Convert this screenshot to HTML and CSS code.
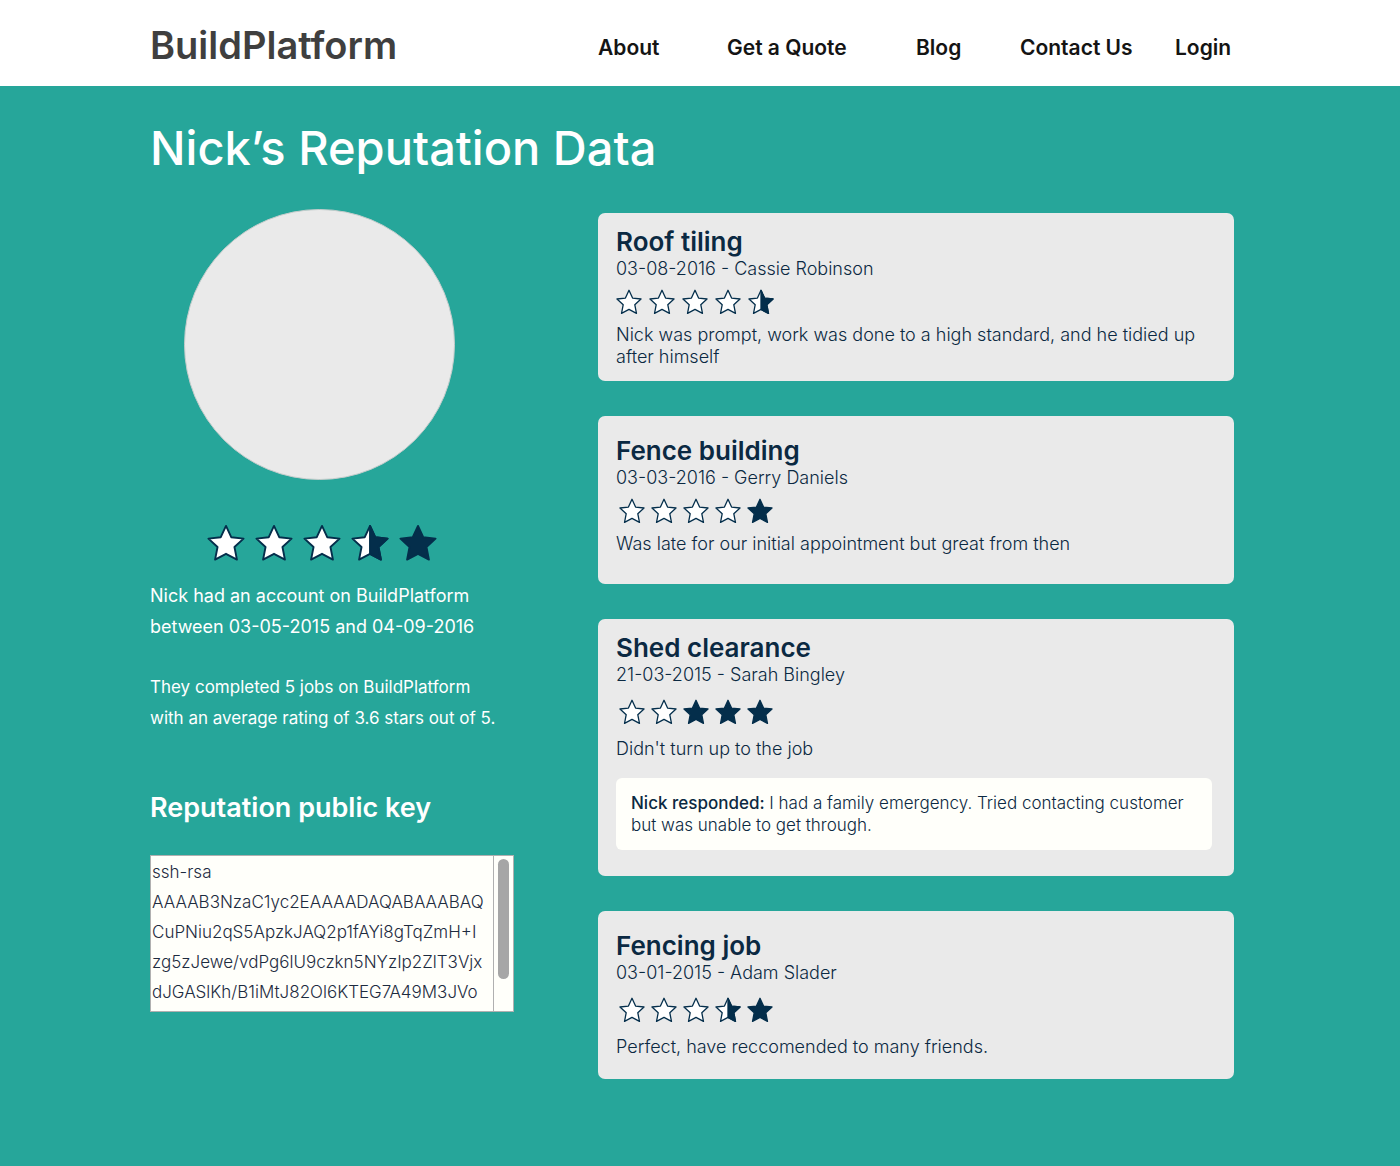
FILE: index.html
```html
<!DOCTYPE html>
<html lang="en">
<head>
  <meta charset="UTF-8" />
  <meta name="viewport" content="width=device-width, initial-scale=1" />
  <title>Nick’s Reputation Data - BuildPlatform</title>
  <link rel="stylesheet" href="styles.css">
</head>
<body>
  <!-- star shapes shared by every rating -->
  <svg class="sprite" aria-hidden="true">
    <defs>
      <path id="star-shape" d="M20 2 L25.5 13.9 L38.5 15.4 L28.9 24.2 L31.5 37.5 L20 31.4 L8.5 37.5 L11.1 24.2 L1.5 15.4 L14.5 13.9 Z" />
      <symbol id="star" viewBox="0 0 40 40" overflow="visible"><use href="#star-shape" fill="#ffffff" /></symbol>
      <symbol id="star-half" viewBox="0 0 40 40" overflow="visible">
        <use href="#star-shape" fill="#ffffff" />
        <path d="M20 2 L25.5 13.9 L38.5 15.4 L28.9 24.2 L31.5 37.5 L20 31.4 Z" fill="#042e4b" />
      </symbol>
      <symbol id="star-dark" viewBox="0 0 40 40" overflow="visible"><use href="#star-shape" fill="#042e4b" /></symbol>
    </defs>
  </svg>

  <header class="site-header">
    <div class="container header-grid">
      <a class="logo" href="#">BuildPlatform</a>
      <nav class="site-nav">
        <a href="#">About</a>
        <a href="#">Get a Quote</a>
        <a href="#">Blog</a>
        <a href="#">Contact Us</a>
        <a href="#">Login</a>
      </nav>
    </div>
  </header>

  <main class="container">
    <h1>Nick’s Reputation Data</h1>

    <div class="columns">
      <section class="profile">
        <div class="avatar"></div>
        <div class="stars stars-large" role="img" aria-label="3.5 stars">
          <svg><use href="#star" /></svg>
          <svg><use href="#star" /></svg>
          <svg><use href="#star" /></svg>
          <svg><use href="#star-half" /></svg>
          <svg><use href="#star-dark" /></svg>
        </div>
        <p>Nick had an account on BuildPlatform<br>between 03-05-2015 and 04-09-2016</p>
        <p class="summary">They completed 5 jobs on BuildPlatform<br>with an average rating of 3.6 stars out of 5.</p>

        <h2><label for="public-key">Reputation public key</label></h2>
        <div class="key-box">
          <textarea id="public-key" class="key" rows="5" readonly spellcheck="false">ssh-rsa
AAAAB3NzaC1yc2EAAAADAQABAAABAQ
CuPNiu2qS5ApzkJAQ2p1fAYi8gTqZmH+I
zg5zJewe/vdPg6lU9czkn5NYzIp2ZlT3Vjx
dJGASlKh/B1iMtJ82Ol6KTEG7A49M3JVo</textarea>
          <div class="key-scroll" aria-hidden="true"><div class="key-thumb"></div></div>
        </div>
      </section>

      <section class="reviews">
        <article class="card">
          <h2>Roof tiling</h2>
          <p>03-08-2016 - Cassie Robinson</p>
          <div class="stars stars-wide" role="img" aria-label="4.5 stars">
            <svg><use href="#star" /></svg>
            <svg><use href="#star" /></svg>
            <svg><use href="#star" /></svg>
            <svg><use href="#star" /></svg>
            <svg><use href="#star-half" /></svg>
          </div>
          <p>Nick was prompt, work was done to a high standard, and he tidied up after himself</p>
        </article>

        <article class="card card-short">
          <h2>Fence building</h2>
          <p>03-03-2016 - Gerry Daniels</p>
          <div class="stars" role="img" aria-label="4 stars">
            <svg><use href="#star" /></svg>
            <svg><use href="#star" /></svg>
            <svg><use href="#star" /></svg>
            <svg><use href="#star" /></svg>
            <svg><use href="#star-dark" /></svg>
          </div>
          <p>Was late for our initial appointment but great from then</p>
        </article>

        <article class="card">
          <h2>Shed clearance</h2>
          <p>21-03-2015 - Sarah Bingley</p>
          <div class="stars stars-tall" role="img" aria-label="2 stars">
            <svg><use href="#star" /></svg>
            <svg><use href="#star" /></svg>
            <svg><use href="#star-dark" /></svg>
            <svg><use href="#star-dark" /></svg>
            <svg><use href="#star-dark" /></svg>
          </div>
          <p>Didn't turn up to the job</p>
          <div class="response">
            <p><strong>Nick responded:</strong> I had a family emergency. Tried contacting customer<br>but was unable to get through.</p>
          </div>
        </article>

        <article class="card card-short">
          <h2>Fencing job</h2>
          <p>03-01-2015 - Adam Slader</p>
          <div class="stars stars-tall" role="img" aria-label="3.5 stars">
            <svg><use href="#star" /></svg>
            <svg><use href="#star" /></svg>
            <svg><use href="#star" /></svg>
            <svg><use href="#star-half" /></svg>
            <svg><use href="#star-dark" /></svg>
          </div>
          <p>Perfect, have reccomended to many friends.</p>
        </article>
      </section>
    </div>
  </main>
</body>
</html>
```
FILE: styles.css
```css
* {
  box-sizing: border-box;
}

body {
  margin: 0;
  min-height: 100vh;
  font-family: Inter, sans-serif;
  font-size: 18px;
  line-height: 22px;
  color: #0b2942;
  background: #26a69a;
}

h1,
h2,
p {
  margin: 0;
}

.sprite {
  display: block;
  width: 0;
  height: 0;
}

.container {
  max-width: 1100px;
  margin: 0 auto;
  padding: 0 16px 0 0;
}

/* header */
.site-header {
  background: #ffffff;
}

.header-grid {
  display: grid;
  grid-template-columns: 448px 1fr;
  align-items: center;
  min-height: 86px;
}

.logo {
  padding-top: 4px;
  font-size: 38px;
  line-height: 44px;
  font-weight: 600;
  color: #3f3f3f;
  text-decoration: none;
}

.site-nav {
  display: grid;
  grid-template-columns: 129fr 189fr 104fr 155fr 59fr;
  padding-top: 10px;
}

.site-nav a {
  font-size: 21px;
  line-height: 24px;
  font-weight: 600;
  color: #141414;
  text-decoration: none;
  white-space: nowrap;
}

h1 {
  padding: 35px 0 34px;
  font-size: 47px;
  line-height: 54px;
  font-weight: 500;
  color: #ffffff;
}

.columns {
  display: grid;
  grid-template-columns: 364px 1fr;
  gap: 84px;
}

/* profile */
.profile {
  color: #ffffff;
  line-height: 31px;
}

.avatar {
  width: 271px;
  height: 271px;
  margin-left: 34px;
  border: 1px solid #c4cccb;
  border-radius: 50%;
  background: #eaeaea;
}

.profile .summary {
  margin-top: 30px;
  font-size: 17px;
}

.profile h2 {
  margin: 58px 0 31px;
  font-size: 27px;
  line-height: 32px;
  font-weight: 600;
}

.key-box {
  display: flex;
  border: 1px solid #b0b0b0;
  background: #fffffa;
}

.key {
  flex: 1;
  min-width: 0;
  padding: 1px 1px 4px;
  border: none;
  border-radius: 0;
  font: inherit;
  font-size: 17px;
  font-weight: 300;
  line-height: 30px;
  color: #1d2b3f;
  background: transparent;
  white-space: pre;
  resize: none;
  overflow: hidden;
}

.key-scroll {
  flex: 0 0 20px;
  padding: 3px 4px;
  border-left: 1px solid #b0b0b0;
}

.key-thumb {
  width: 11px;
  height: 120px;
  border-radius: 6px;
  background: #a6a6a6;
}

/* stars */
.stars {
  display: flex;
  align-items: center;
  gap: 6px;
  height: 44px;
  padding-left: 3px;
}

.stars svg {
  width: 26px;
  height: 26px;
  overflow: visible;
  stroke: #042e4b;
  stroke-width: 2;
  stroke-linejoin: round;
}

.stars-wide {
  gap: 7px;
  padding-left: 0;
}

.stars-tall {
  height: 52px;
}

.stars-large {
  gap: 10px;
  height: 38px;
  margin: 44px 0 18px;
  padding-left: 57px;
}

.stars-large svg {
  width: 38px;
  height: 38px;
}

/* review cards */
.reviews {
  display: flex;
  flex-direction: column;
  gap: 35px;
  padding-top: 4px;
}

.card {
  min-height: 168px;
  padding: 13px 22px 12px 18px;
  border-radius: 7px;
  font-weight: 300;
  background: #eaeaea;
}

.card-short {
  padding-top: 19px;
}

.card h2 {
  font-size: 26px;
  line-height: 32px;
  font-weight: 600;
}

.response {
  margin: 18px 0 14px;
  padding: 14px 15px;
  border-radius: 6px;
  font-size: 17px;
  background: #fffffa;
}

.response strong {
  font-weight: 500;
}

@media (max-width: 1000px) {
  .container {
    padding: 0 16px;
  }

  .header-grid {
    grid-template-columns: 1fr;
    padding-top: 16px;
    padding-bottom: 16px;
  }

  .columns {
    grid-template-columns: 1fr;
    gap: 40px;
  }
}
```
